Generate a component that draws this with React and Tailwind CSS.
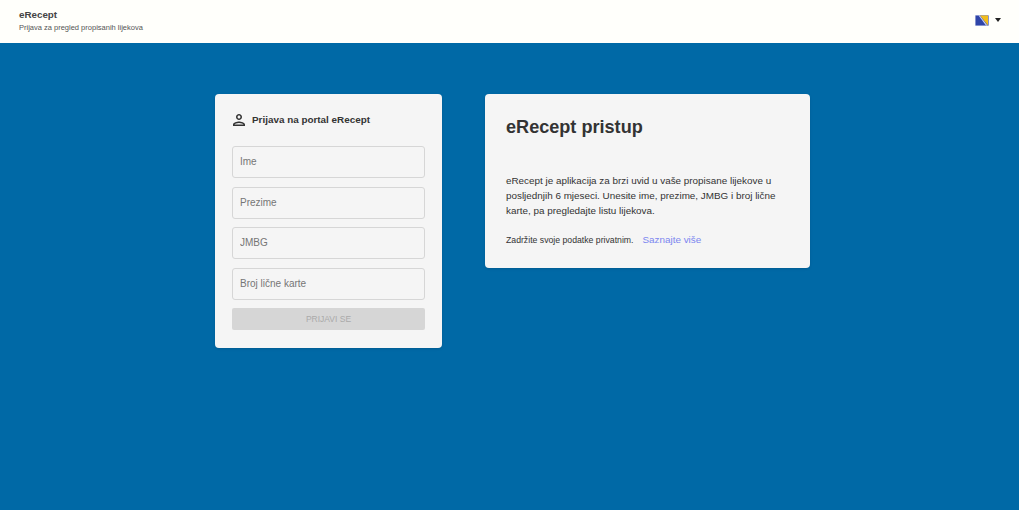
import React from "react";

const Field = ({ label }) => (
  <input
    type="text"
    placeholder={label}
    className="w-full h-[32px] px-[7px] pb-[1px] border border-[#d6d6d6] rounded-[3px] bg-transparent text-[10px] outline-none placeholder:text-[#757575]"
  />
);

const PersonIcon = () => (
  <svg width="18" height="18" viewBox="0 0 24 24" fill="#333333" className="ml-[-2px] mr-[-2px]">
    <path d="M12 6c1.1 0 2 .9 2 2s-.9 2-2 2-2-.9-2-2 .9-2 2-2m0 10c2.7 0 5.8 1.29 6 2H6c.23-.72 3.31-2 6-2m0-12C9.79 4 8 5.79 8 8s1.79 4 4 4 4-1.79 4-4-1.79-4-4-4zm0 10c-2.67 0-8 1.34-8 4v2h16v-2c0-2.66-5.33-4-8-4z" />
  </svg>
);

const Flag = () => (
  <svg width="14" height="11" viewBox="0 0 14 11">
    <rect width="14" height="11" fill="#dfe3f2" />
    <rect x="0.5" y="0.5" width="13" height="10" fill="#2f45a8" />
    <path d="M5 0.5H13V10.5Z" fill="#f2bd1a" />
    <path d="M3.6 0.5L4.8 0.5L12.4 10.5H11Z" fill="#cfd6f2" />
  </svg>
);

export default function App() {
  return (
    <div className="h-[510px] flex flex-col bg-[#0069a6] font-['Liberation_Sans',Arial,sans-serif] overflow-hidden">
      <header className="h-[43px] shrink-0 bg-[#fffffb] flex items-center justify-between pl-[19px] pr-[18px]">
        <div className="mt-[-2px]">
          <div className="text-[9.8px] leading-[14px] font-bold text-[#444444]">eRecept</div>
          <div className="text-[7.5px] leading-[12px] text-[#555555]">Prijava za pregled propisanih lijekova</div>
        </div>
        <div className="flex items-center gap-[6px] mt-[-3px]">
          <Flag />
          <div className="w-0 h-0 border-x-[3.5px] border-x-transparent border-t-[4px] border-t-[#222222]" />
        </div>
      </header>
      <main className="flex items-start pt-[51px] pl-[215px] gap-[43px]">
        <section className="w-[227px] h-[254px] bg-[#f5f5f5] rounded-[4px] shadow-sm px-[17px]">
          <div className="flex items-center gap-[6px] h-[52px]">
            <PersonIcon />
            <h2 className="text-[9.9px] font-bold text-[#333333]">Prijava na portal eRecept</h2>
          </div>
          <div className="flex flex-col gap-[8.7px]">
            <Field label="Ime" />
            <Field label="Prezime" />
            <Field label="JMBG" />
            <Field label="Broj lične karte" />
          </div>
          <button
            disabled
            className="w-full h-[22px] mt-[8px] bg-[#d6d6d6] rounded-[2px] text-[8.5px] text-[#aaaaaa]"
          >
            PRIJAVI SE
          </button>
        </section>
        <section className="w-[325px] h-[174px] bg-[#f5f5f5] rounded-[4px] shadow-sm px-[21px]">
          <h1 className="text-[18.1px] leading-[22px] mt-[22px] font-bold text-[#333333]">eRecept pristup</h1>
          <p className="mt-[35px] text-[9.9px] leading-[15px] text-[#333333]">
            eRecept je aplikacija za brzi uvid u vaše propisane lijekove u posljednjih 6 mjeseci. Unesite ime, prezime, JMBG i broj lične karte, pa pregledajte listu lijekova.
          </p>
          <div className="mt-[15px] flex items-center gap-[9px]">
            <span className="text-[8.7px] text-[#333333]">Zadržite svoje podatke privatnim.</span>
            <a href="#" className="text-[9.9px] text-[#7b86f0]">Saznajte više</a>
          </div>
        </section>
      </main>
    </div>
  );
}
